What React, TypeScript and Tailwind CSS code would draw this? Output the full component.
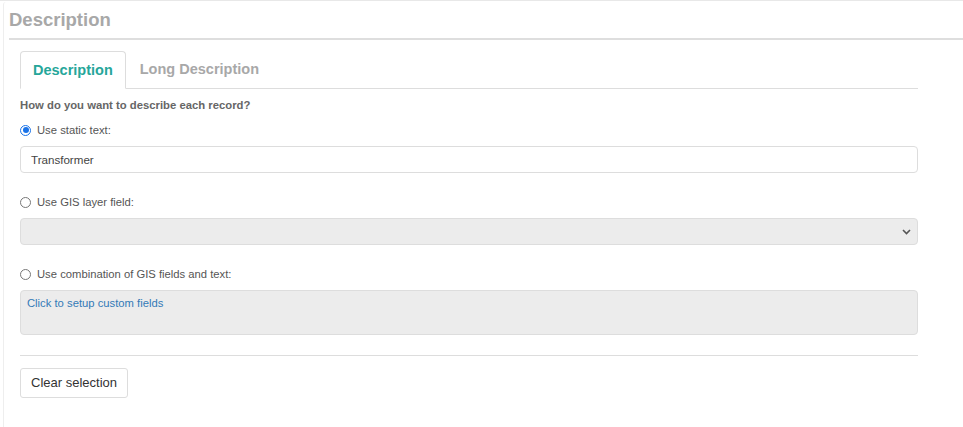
import React from "react";

function Radio({ checked }: { checked?: boolean }) {
  return checked ? (
    <span className="inline-flex h-[11px] w-[11px] items-center justify-center rounded-full border-[1.5px] border-[#1a73e8] bg-white">
      <span className="h-[6px] w-[6px] rounded-full bg-[#1a73e8]" />
    </span>
  ) : (
    <span className="inline-block h-[11px] w-[11px] rounded-full border border-[#777] bg-white" />
  );
}

export default function App() {
  return (
    <div
      className="h-[427px] w-[963px] bg-white"
      style={{ fontFamily: '"Liberation Sans", Arial, sans-serif' }}
    >
      <div className="h-full border-t border-[#e8e8e8] pt-[1px]">
        <div className="ml-[3px] h-full rounded-tl-[3px] border-l border-[#eeeeee] pl-[5px] pt-[7px]">
          <h2 className="text-[18.5px] font-bold leading-[22px] text-[#a8a8a8]">Description</h2>
          <div className="mt-[7px] h-[2px] bg-[#dedede]" />
          <div className="w-[909px] pl-[11px] pt-[10px]">
            <div className="flex items-end border-b border-[#dddddd]">
              <div className="-mb-px flex h-[38px] items-center rounded-t-[4px] border border-b-white border-[#dddddd] bg-white px-[12px] pt-[2px] text-[14.5px] font-bold text-[#26a69a]">
                Description
              </div>
              <div className="flex h-[38px] items-center px-[14px] pt-[2px] text-[14.5px] font-bold text-[#a8a8a8]">
                Long Description
              </div>
            </div>
            <p className="mt-[9px] text-[11.3px] font-bold leading-[14px] text-[#666]">
              How do you want to describe each record?
            </p>
            <label className="mt-[11px] flex items-center gap-[6px] text-[11.25px] leading-[14px] text-[#555]">
              <Radio checked />
              Use static text:
            </label>
            <div className="mt-[9px] flex h-[27px] items-center rounded-[4px] border border-[#dddddd] bg-white px-[10px] text-[11.6px] text-[#444]">
              Transformer
            </div>
            <label className="mt-[22px] flex items-center gap-[6px] text-[11.25px] leading-[14px] text-[#555]">
              <Radio />
              Use GIS layer field:
            </label>
            <div className="mt-[9px] flex h-[27px] items-center justify-end rounded-[4px] border border-[#dddddd] bg-[#ececec] pr-[6px]">
              <svg width="9" height="6" viewBox="0 0 9 6">
                <path d="M1 1 L4.5 4.5 L8 1" fill="none" stroke="#555" strokeWidth="1.6" />
              </svg>
            </div>
            <label className="mt-[22px] flex items-center gap-[6px] text-[11.25px] leading-[14px] text-[#555]">
              <Radio />
              Use combination of GIS fields and text:
            </label>
            <div className="mt-[9px] h-[45px] rounded-[4px] border border-[#dddddd] bg-[#ececec] px-[6px] pt-[5px] text-[11.25px] leading-[14px] text-[#337ab7]">
              Click to setup custom fields
            </div>
            <div className="mt-[20px] h-px bg-[#dddddd]" />
            <button className="mt-[12px] h-[30px] rounded-[3px] border border-[#dddddd] bg-white px-[10px] text-[13px] text-[#333]">
              Clear selection
            </button>
          </div>
        </div>
      </div>
    </div>
  );
}
